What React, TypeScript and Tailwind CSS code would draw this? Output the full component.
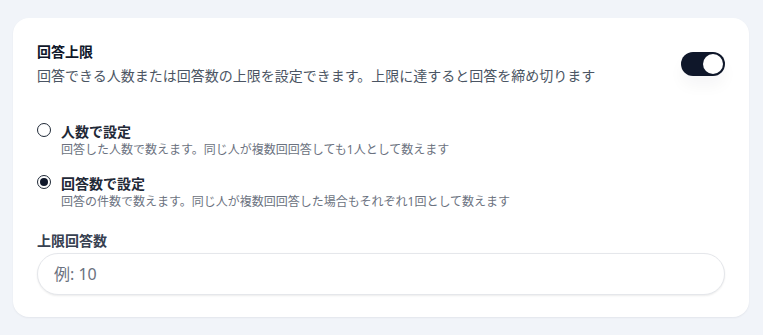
import React from "react";

const font = { fontFamily: '"Noto Sans", "Noto Sans CJK JP", sans-serif' };

function Radio({ checked }: { checked: boolean }) {
  return (
    <span className="mt-[1px] flex h-[14px] w-[14px] shrink-0 items-center justify-center rounded-full border-[1.5px] border-[#1f2937] bg-white">
      {checked && <span className="h-[8px] w-[8px] rounded-full bg-[#0f172a]" />}
    </span>
  );
}

function Option({ checked, label, desc }: { checked: boolean; label: string; desc: string }) {
  return (
    <div className="flex items-start gap-[10px]">
      <Radio checked={checked} />
      <div className="flex flex-col">
        <span className="text-[14px] font-bold leading-5 text-[#1f2937]">{label}</span>
        <span className="text-[12px] leading-4 text-[#6b7280]">{desc}</span>
      </div>
    </div>
  );
}

export default function App() {
  return (
    <div className="min-h-[335px] w-[763px] bg-[#f1f4f9] pl-[13px] pr-[14px] pt-[18px]" style={font}>
      <div className="rounded-[16px] bg-white px-[24px] pb-[22px] pt-[24px] shadow-[0_1px_2px_rgba(15,23,42,0.06)]">
        <div className="flex items-center justify-between">
          <div className="flex flex-col">
            <span className="text-[14px] font-bold leading-5 text-[#0f172a]">回答上限</span>
            <span className="mt-1 text-[14px] leading-5 text-[#4b5563]">
              回答できる人数または回答数の上限を設定できます。上限に達すると回答を締め切ります
            </span>
          </div>
          <div className="relative flex h-[24px] w-[44px] items-center justify-end rounded-full bg-[#0f172a] pr-[2px] shadow-[0_10px_15px_rgba(15,23,42,0.04)]">
            <span className="h-[20px] w-[20px] rounded-full bg-white" />
          </div>
        </div>

        <div className="mt-9 flex flex-col gap-4">
          <Option
            checked={false}
            label="人数で設定"
            desc="回答した人数で数えます。同じ人が複数回回答しても1人として数えます"
          />
          <Option
            checked={true}
            label="回答数で設定"
            desc="回答の件数で数えます。同じ人が複数回回答した場合もそれぞれ1回として数えます"
          />
        </div>

        <div className="mt-[21px] text-[14px] font-bold leading-5 text-[#374151]">上限回答数</div>
        <div className="mt-[2px] flex h-[42px] items-center rounded-full border border-[#e5e7eb] bg-white pl-[16px] shadow-[0_1px_2px_rgba(0,0,0,0.08)]">
          <span className="text-[16px] text-[#6b7280]">例: 10</span>
        </div>
      </div>
    </div>
  );
}
